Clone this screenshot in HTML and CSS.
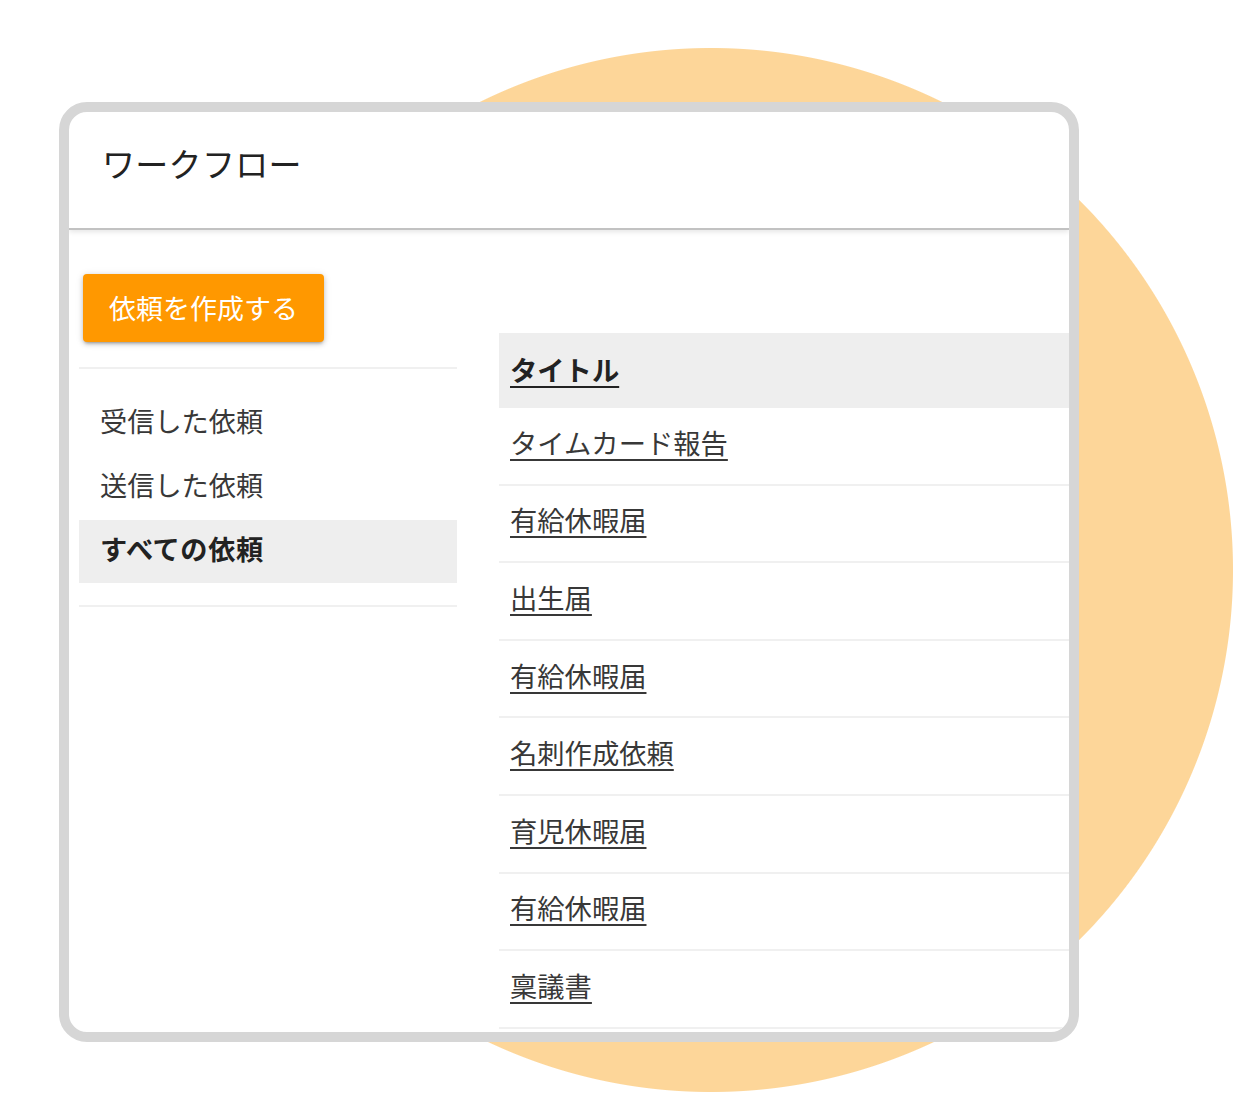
FILE: index.html
```html
<!DOCTYPE html>
<html lang="ja">
<head>
<meta charset="utf-8">
<title>ワークフロー</title>
<link rel="stylesheet" href="styles.css">
</head>
<body>
<div class="page">
  <div class="frame">
    <header class="appbar">
      <h1 class="appbar-title">ワークフロー</h1>
    </header>
    <div class="content">
      <aside class="sidebar">
        <button class="create-btn">依頼を作成する</button>
        <ul class="nav">
          <li class="nav-item">受信した依頼</li>
          <li class="nav-item">送信した依頼</li>
          <li class="nav-item selected">すべての依頼</li>
        </ul>
      </aside>
      <main class="list">
        <div class="list-head"><a class="head-link" href="#">タイトル</a></div>
        <div class="row"><a class="row-link" href="#">タイムカード報告</a></div>
        <div class="row"><a class="row-link" href="#">有給休暇届</a></div>
        <div class="row"><a class="row-link" href="#">出生届</a></div>
        <div class="row"><a class="row-link" href="#">有給休暇届</a></div>
        <div class="row"><a class="row-link" href="#">名刺作成依頼</a></div>
        <div class="row"><a class="row-link" href="#">育児休暇届</a></div>
        <div class="row"><a class="row-link" href="#">有給休暇届</a></div>
        <div class="row"><a class="row-link" href="#">稟議書</a></div>
      </main>
    </div>
  </div>
</div>
</body>
</html>
```

FILE: styles.css
```css
* { box-sizing: border-box; }

html, body {
  margin: 0;
  padding: 0;
  background: #ffffff;
}

body {
  font-family: "Noto Sans CJK JP", "Noto Sans", sans-serif;
  color: #333333;
}

.page {
  width: 1240px;
  height: 1100px;
  overflow: hidden;
  padding-top: 102px;
  padding-left: 59px;
  background: radial-gradient(circle 522px at 711px 570px, #fdd699 0, #fdd699 521.5px, rgba(253,214,153,0) 522.5px);
}

.frame {
  width: 1020px;
  height: 940px;
  border: 10px solid #d6d6d6;
  border-radius: 28px;
  background: #ffffff;
  overflow: hidden;
  display: flex;
  flex-direction: column;
}

.appbar {
  height: 118px;
  flex: none;
  display: flex;
  align-items: center;
  padding-left: 33px;
  padding-bottom: 14px;
  border-bottom: 2px solid #c2c2c2;
  box-shadow: 0 2px 5px rgba(0,0,0,0.10);
  position: relative;
  z-index: 1;
}

.appbar-title {
  margin: 0;
  font-size: 33px;
  font-weight: 400;
  color: #222222;
  line-height: 1;
  letter-spacing: 0.3px;
}

.content {
  flex: 1;
  display: flex;
  gap: 42px;
  padding-left: 10px;
}

.sidebar {
  width: 378px;
  flex: none;
  padding-top: 44px;
}

.create-btn {
  display: block;
  margin-left: 4px;
  width: 241px;
  height: 68px;
  border: none;
  border-radius: 4px;
  background: #ff9800;
  color: #ffffff;
  font-family: inherit;
  font-size: 27px;
  font-weight: 400;
  letter-spacing: 0;
  box-shadow: 0 3px 3px -2px rgba(0,0,0,0.25), 0 2px 5px rgba(0,0,0,0.18), 0 1px 8px rgba(0,0,0,0.10);
  padding: 0 0 2px 0;
}

.nav {
  list-style: none;
  margin: 25px 0 0 0;
  padding: 22px 0 22px 0;
  border-top: 2px solid #f0f0f0;
  border-bottom: 2px solid #f0f0f0;
}

.nav-item {
  height: 64px;
  display: flex;
  align-items: center;
  padding-left: 21px;
  padding-bottom: 6px;
  font-size: 27.2px;
  color: #383838;
}

.nav-item.selected {
  height: 63px;
  margin-top: 1px;
  background: #eeeeee;
  font-weight: 700;
  color: #222222;
  padding-bottom: 8px;
  letter-spacing: 0.6px;
}

.list {
  flex: 1;
  padding-top: 103px;
}

.list-head {
  height: 75px;
  background: #eeeeee;
  display: flex;
  align-items: center;
  padding-left: 11px;
  padding-bottom: 4px;
}

.head-link {
  font-size: 27.3px;
  font-weight: 700;
  color: #222222;
  text-decoration: underline;
  text-decoration-thickness: 2px;
  text-underline-offset: 5px;
}

.row {
  height: 77.6px;
  border-bottom: 2px solid #f0f0f0;
  display: flex;
  align-items: center;
  padding-left: 11px;
  padding-bottom: 8px;
}

.row-link {
  font-size: 27.3px;
  color: #383838;
  text-decoration: underline;
  text-decoration-thickness: 2px;
  text-underline-offset: 5px;
}
```
